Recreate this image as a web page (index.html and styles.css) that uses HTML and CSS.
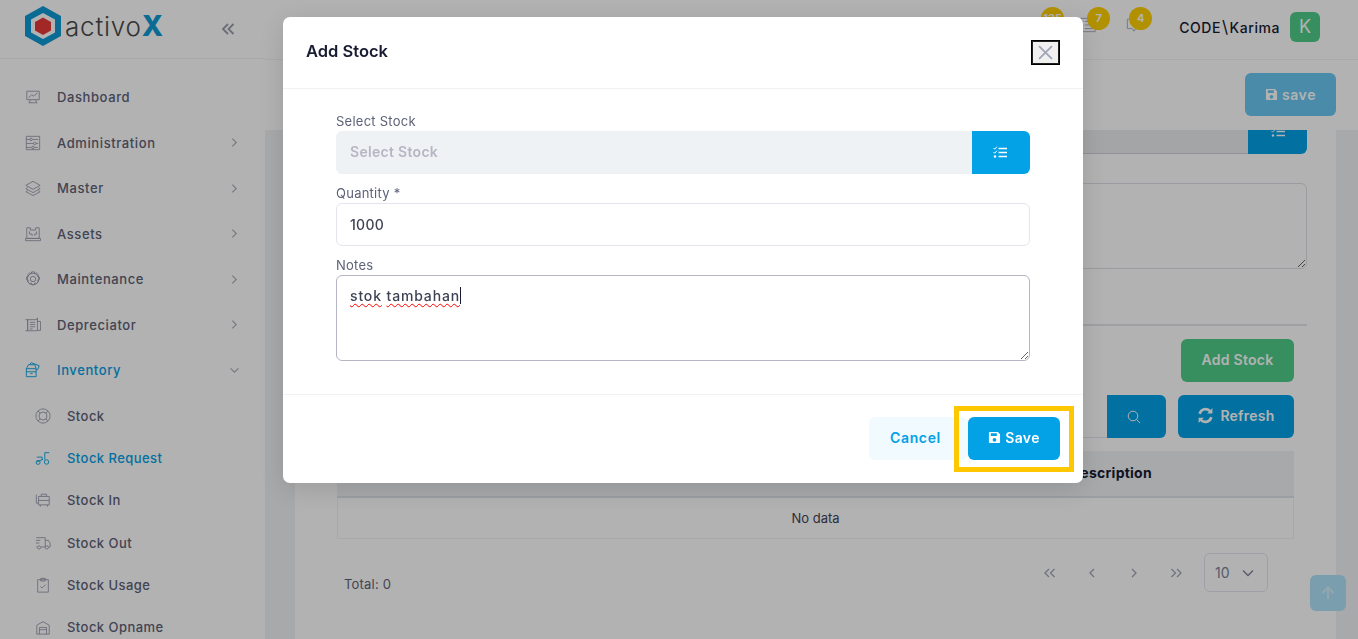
FILE: index.html
```html
<!DOCTYPE html>
<html lang="en">
<head>
<meta charset="utf-8">
<title>Add Stock</title>
<link rel="stylesheet" href="styles.css">
</head>
<body>
<div class="app">
  <aside class="sidebar">
    <div class="brand">
      <svg class="logo" viewBox="0 0 36 40" width="36" height="40"><path d="M18 0 36 10V30L18 40 0 30V10Z" fill="#0f9ad6"/><path d="M18 7 30 13.5V26.500L18 33 6 26.500V13.500Z" fill="#fff"/><path d="M18 11.500 26 16V24.500L18 29 10 24.500V16Z" fill="#e83a3a"/></svg>
      <span class="brand-name">activo<b>X</b></span>
      <svg class="collapse" viewBox="0 0 14 14" width="14" height="14"><path d="M7 2 2 7l5 5M12.500 2l-5 5 5 5" fill="none" stroke="#9a9cae" stroke-width="1.800"/></svg>
    </div>
    <nav class="nav">
      <a class="nav-item"><svg class="ico" viewBox="0 0 18 18"><path d="M2 2.500h14v9.500H2zM5 15.500 6 12m7 3.500L12 12M4 15.500h10M4 10l3.500-3.500 2 1.500L14 4.500"/></svg><span>Dashboard</span></a>
      <a class="nav-item"><svg class="ico" viewBox="0 0 18 18"><path d="M1.500 1.500h15v15h-15zM1.500 5h4m3 0h6.500M1.500 9.500h8m3 0h2.500M1.500 14h6m3 0h4"/><circle cx="6.800" cy="5" r="1.400"/><circle cx="11" cy="9.500" r="1.400"/><circle cx="9" cy="14" r="1.400"/></svg><span>Administration</span><svg class="chev" viewBox="0 0 8 12"><path d="M1.500 1.500 6 6l-4.500 4.500"/></svg></a>
      <a class="nav-item"><svg class="ico" viewBox="0 0 18 18"><path d="M9 1.500 17 6 9 10.500 1 6zM3 8.500 1 9.700 9 14.200l8-4.500-2-1.200M3 12 1 13.200 9 17.500l8-4.300L15 12"/></svg><span>Master</span><svg class="chev" viewBox="0 0 8 12"><path d="M1.500 1.500 6 6l-4.500 4.500"/></svg></a>
      <a class="nav-item"><svg class="ico" viewBox="0 0 18 18"><path d="M2 2h4v2.500h6V2h4v12H2zM.500 14h17v2.500H.500zM5 6v3h3v2M13 6v3h-2v2"/></svg><span>Assets</span><svg class="chev" viewBox="0 0 8 12"><path d="M1.500 1.500 6 6l-4.500 4.500"/></svg></a>
      <a class="nav-item"><svg class="ico" viewBox="0 0 18 18"><circle cx="9" cy="9" r="6.500"/><circle cx="9" cy="9" r="3"/><path d="M7.500 1h3l.5 2 2-.8 2 2-.8 2 2 .5v3l-2 .5.8 2-2 2-2-.8-.5 2h-3l-.5-2-2 .8-2-2 .8-2-2-.5v-3l2-.5-.8-2 2-2 2 .8z"/></svg><span>Maintenance</span><svg class="chev" viewBox="0 0 8 12"><path d="M1.500 1.500 6 6l-4.500 4.500"/></svg></a>
      <a class="nav-item"><svg class="ico" viewBox="0 0 18 18"><path d="M3 3h10l1-2v14.500H3zM.500 3H3v12.500H.500M14 5h3.500v10H14M5.500 6h6m-6 2.500h6m-6 2.500h6m-6 2.500h3"/></svg><span>Depreciator</span><svg class="chev" viewBox="0 0 8 12"><path d="M1.500 1.500 6 6l-4.500 4.500"/></svg></a>
      <a class="nav-item active"><svg class="ico" viewBox="0 0 18 18"><path d="M1.500 7.500h11v9h-11zM1.500 11h11M6 13h2.500M1.500 7.500 4 3h7l1.500 4.500M5 3 7 .8l9 3.400-1.500 4-2 1"/></svg><span>Inventory</span><svg class="chev down" viewBox="0 0 12 8"><path d="M1.500 1.500 6 6l4.500-4.500"/></svg></a>
      <div class="subnav">
        <a class="sub-item"><svg class="ico" viewBox="0 0 18 18"><circle cx="9" cy="9" r="8"/><circle cx="9" cy="9" r="4.500"/><path d="m3.300 3.300 2.500 2.500m6.400 6.400 2.500 2.500m0-11.400-2.500 2.500m-6.400 6.400-2.500 2.500"/></svg><span>Stock</span></a>
        <a class="sub-item active"><svg class="ico" viewBox="0 0 18 18"><path d="M1.500 13.500 9 10.500M11 3h5M11 3v8M2 8h6v3"/><circle cx="3.500" cy="14" r="2.200"/><circle cx="13" cy="13.500" r="2.500"/></svg><span>Stock Request</span></a>
        <a class="sub-item"><svg class="ico" viewBox="0 0 18 18"><path d="M4 5h12v9.500H4zM7 5V2.500h6V5M1.500 3v9.500H4M6 14.500V16.500M14 14.500V16.500M4 9.500h12"/></svg><span>Stock In</span></a>
        <a class="sub-item"><svg class="ico" viewBox="0 0 18 18"><path d="M1.500 3h10v10.500H6.500M11.500 6H15l2 3v4.500h-2M1 6h5M1 9h4M1.500 13.500H2.500"/><circle cx="4.500" cy="14" r="1.800"/><circle cx="13.300" cy="14" r="1.800"/></svg><span>Stock Out</span></a>
        <a class="sub-item"><svg class="ico" viewBox="0 0 18 18"><path d="M3 3h12v14H3zM6.500 1.500h5V4.500h-5zM6 10.500l2 2 4-4"/></svg><span>Stock Usage</span></a>
        <a class="sub-item"><svg class="ico" viewBox="0 0 18 18"><path d="M2 7 9 3l7 4v10H2zM5 17V9.500h8V17M5 12h8"/></svg><span>Stock Opname</span></a>
      </div>
    </nav>
  </aside>

  <main class="main">
    <header class="topbar">
      <div class="notice">
        <svg class="top-ico" viewBox="0 0 18 18"><path d="M2 4h14M2 9h14M2 14h14"/></svg>
        <span class="badge">135</span>
      </div>
      <div class="notice">
        <svg class="top-ico" viewBox="0 0 18 18"><path d="M1 1.500h16v15H1zM5.500 5H15M5.500 9H15M5.500 13H15M2.500 5h1.500M2.500 9h1.500M2.500 13h1.500"/></svg>
        <span class="badge">7</span>
      </div>
      <div class="notice narrow">
        <svg class="top-ico" viewBox="0 0 18 18"><path d="M1.500 2.500h15V13H11l-2 3-2-3H1.500z"/></svg>
        <span class="badge">4</span>
      </div>
      <div class="user">CODE<span class="slash">\</span>Karima</div>
      <div class="avatar">K</div>
    </header>

    <div class="toolbar">
      <button class="btn btn-ghost-save" type="button"><svg class="floppy" viewBox="0 0 14 14"><path d="M1.500 1h9L13 3.500V12a1 1 0 0 1-1 1H2a1 1 0 0 1-1-1V1.500zM3 2.500V5.500h6.500V2.500zM7 7.500a2 2 0 1 0 .01 0z" fill-rule="evenodd"/></svg>save</button>
    </div>

    <div class="content">
      <section class="card">
        <div class="input-group back-select">
          <div class="back-input"></div>
          <div class="back-addon"><svg class="list-ico" viewBox="0 0 14 12"><path d="M5.500 2.500H14M5.500 6.500H14M5.500 10.500H14"/><path class="tick" d="m.5 2 1.200 1.200L4 .7M.5 6l1.200 1.200L4 4.700"/><circle class="dot" cx="2" cy="10.500" r="1.200"/></svg></div>
        </div>
        <textarea class="back-notes" aria-label="Notes"></textarea>
        <hr class="divider">
        <div class="stock-panel">
          <div class="panel-actions"><button class="btn btn-green" type="button">Add Stock</button></div>
          <div class="search-row">
            <div class="search-input"></div>
            <div class="search-btn"><svg class="mag" viewBox="0 0 14 14"><circle cx="6" cy="6" r="4.800"/><path d="m9.500 9.500 3.500 3.500"/></svg></div>
            <button class="btn btn-refresh" type="button"><svg class="refresh" viewBox="0 0 16 16"><path d="M2.500 6.500A5.800 5.800 0 0 1 12.500 4M13.500 9.500A5.800 5.800 0 0 1 3.500 12" fill="none" stroke-width="2.400"/><path d="M14.500 1v5h-5zM1.500 15v-5h5z" stroke="none"/></svg>Refresh</button>
          </div>
          <div class="table">
            <div class="thead"><span>Description</span></div>
            <div class="tbody">No data</div>
          </div>
          <div class="pager-row">
            <span class="total">Total: 0</span>
            <div class="pager">
              <svg class="pg" viewBox="0 0 12 10"><path d="M5 1 1 5l4 4M10.500 1l-4 4 4 4"/></svg>
              <svg class="pg" viewBox="0 0 12 10"><path d="M8 1 4 5l4 4"/></svg>
              <svg class="pg" viewBox="0 0 12 10"><path d="m4 1 4 4-4 4"/></svg>
              <svg class="pg" viewBox="0 0 12 10"><path d="m1.500 1 4 4-4 4M7 1l4 4-4 4"/></svg>
              <div class="page-size"><span>10</span><svg class="pg-down" viewBox="0 0 12 8"><path d="m1 1.500 5 5 5-5"/></svg></div>
            </div>
          </div>
        </div>
      </section>
    </div>
  </main>
</div>

<div class="to-top"><svg viewBox="0 0 14 14" width="14" height="14"><path d="M7 13V1.500M1.500 7 7 1.500 12.500 7" fill="none" stroke="#d4f0fd" stroke-width="2"/></svg></div>

<div class="backdrop"></div>

<div class="modal">
  <div class="modal-head">
    <h2>Add Stock</h2>
    <div class="close"><svg viewBox="0 0 14 14" width="15" height="15"><path d="M1 1l12 12M13 1 1 13" stroke="#a1a5b7" stroke-width="1.700" fill="none"/></svg></div>
  </div>
  <div class="modal-body">
    <label class="label">Select Stock</label>
    <div class="input-group">
      <div class="control disabled">Select Stock</div>
      <div class="addon"><svg class="list-ico" viewBox="0 0 14 12"><path d="M5.500 2.500H14M5.500 6.500H14M5.500 10.500H14"/><path class="tick" d="m.5 2 1.200 1.200L4 .7M.5 6l1.200 1.200L4 4.700"/><circle class="dot" cx="2" cy="10.500" r="1.200"/></svg></div>
    </div>
    <label class="label">Quantity *</label>
    <div class="control">1000</div>
    <label class="label">Notes</label>
    <div class="control notes"><span class="typed">stok</span> <span class="typed caret">tambahan</span></div>
  </div>
  <div class="modal-foot">
    <button class="btn btn-cancel" type="button">Cancel</button>
    <button class="btn btn-save" type="button"><svg class="floppy" viewBox="0 0 14 14"><path d="M1.500 1h9L13 3.500V12a1 1 0 0 1-1 1H2a1 1 0 0 1-1-1V1.500zM3 2.500V5.500h6.500V2.500zM7 7.500a2 2 0 1 0 .01 0z" fill-rule="evenodd"/></svg>Save</button>
  </div>
</div>

<div class="highlight"></div>
</body>
</html>
```
FILE: styles.css
```css
* { box-sizing: border-box; }
html, body { margin: 0; height: 100%; overflow: hidden; }
body { font-family: Inter, "Noto Sans", sans-serif; font-size: 13px; color: #3f4254; background: #fff; }
button { font-family: inherit; border: 0; cursor: pointer; }

.app { display: grid; grid-template-columns: 265px 1fr; height: 639px; overflow: hidden; }

/* sidebar */
.sidebar { background: #fff; overflow: hidden; }
.brand { height: 59px; border-bottom: 1px solid #eff2f5; display: flex; align-items: center; padding: 0 30px 7px 25px; }
.logo { flex: none; margin-top: 1px; }
.brand-name { margin-left: 4px; font-size: 26px; font-weight: 300; letter-spacing: .8px; color: #4a4a4a; flex: 1; line-height: 1; }
.brand-name b { font-weight: 800; font-size: 28px; color: #0f9ad6; margin-left: 0; }
.collapse { flex: none; margin-top: 7px; }
.nav { padding-top: 15.600px; display: flex; flex-direction: column; }
.nav-item { height: 45.500px; display: flex; align-items: center; padding: 0 27px 0 25px; color: #5e6278; font-weight: 500; letter-spacing: .6px; }
.nav-item span { margin-left: 16px; flex: 1; }
.ico { width: 16px; height: 16px; flex: none; fill: none; stroke: #9a9cae; stroke-width: 1; }
.chev { width: 7px; height: 11px; fill: none; stroke: #a9abb9; stroke-width: 1.300; flex: none; }
.chev.down { width: 11px; height: 7px; margin-right: -2px; }
.nav-item.active, .sub-item.active { color: #03a1e6; }
.active .ico { stroke: #03a1e6; }
.subnav { display: flex; flex-direction: column; margin-top: 1.400px; }
.sub-item { height: 42.300px; display: flex; align-items: center; padding-left: 35px; color: #5e6278; font-weight: 500; letter-spacing: .45px; }
.sub-item span { margin-left: 16px; }

/* topbar */
.main { display: flex; flex-direction: column; min-width: 0; }
.topbar { height: 60px; flex: none; border-bottom: 1px solid #eff2f5; display: flex; align-items: center; justify-content: flex-end; padding: 0 38px 6px 0; }
.notice { width: 46px; height: 34px; position: relative; display: flex; align-items: flex-start; }
.notice.narrow { width: 51px; }
.top-ico { width: 16px; height: 16px; fill: none; stroke: #a1a5b7; stroke-width: 1; margin: 7px 0 0 -2px; }
.badge { position: absolute; left: 5px; top: -3px; width: 23px; height: 23px; border-radius: 50%; background: #ffd000; color: #fff; font-size: 11px; font-weight: 700; display: flex; align-items: center; justify-content: center; }
.notice.narrow .badge { left: 1px; }
.user { font-weight: 500; font-size: 14px; color: #181c32; letter-spacing: .55px; margin-right: 10px; white-space: nowrap; }
.slash { font-size: 17px; padding: 0 1px; font-weight: 400; }
.avatar { width: 30px; height: 30px; border-radius: 6px; background: #50cd89; color: #fff; font-size: 18px; display: flex; align-items: center; justify-content: center; }

/* toolbar */
.toolbar { height: 70px; flex: none; background: #fff; display: flex; justify-content: flex-end; padding: 13px 22px 0 0; position: relative; z-index: 1; }
.btn { height: 43px; border-radius: 6px; display: inline-flex; align-items: center; justify-content: center; padding-bottom: 4px; font-size: 14px; font-weight: 600; letter-spacing: .25px; }
.btn-ghost-save { width: 91px; background: #6bc7f4; color: #fff; letter-spacing: .6px; padding-bottom: 2px; }
.floppy { width: 13px; height: 13px; fill: currentColor; margin-right: 4px; flex: none; }

/* page content behind */
.content { flex: 1; background: #f1f2f5; padding: 0 22px 0 30px; display: flex; }
.card { flex: 1; background: #fff; padding: 0 29px 0 42px; min-width: 0; }
.input-group { display: flex; }
.back-select { height: 24px; }
.back-input { flex: 1; background: #ebedf0; border-bottom: 1px solid #d0d2da; }
.back-addon { width: 59px; background: #03a1e6; border-bottom-right-radius: 6px; display: flex; justify-content: center; }
.back-addon .list-ico { margin-top: -5px; }
.list-ico { width: 14px; height: 12px; fill: none; stroke: #fff; stroke-width: 1.700; }
.list-ico .tick { stroke-width: 1; }
.list-ico .dot { fill: #fff; stroke: none; }
.back-notes { display: block; width: 100%; height: 86px; margin-top: 29px; border: 1px solid #dfe0e7; border-radius: 6px; background: #fff; outline: 0; }
.divider { border: 0; height: 2px; background: #e4e6ea; margin: 55px 0 0; }
.stock-panel { margin-right: 13px; margin-top: 13px; }
.panel-actions { display: flex; justify-content: flex-end; }
.btn-green { width: 113px; background: #50cd89; color: #fff; }
.search-row { display: flex; justify-content: flex-end; margin-top: 13px; height: 43px; }
.search-input { width: 300px; border-bottom: 1px solid #e4e6ef; }
.search-btn { width: 59px; background: #03a1e6; border-radius: 0 6px 6px 0; display: flex; align-items: center; justify-content: center; padding-right: 5px; }
.mag { width: 14px; height: 14px; fill: none; stroke: #fff; stroke-width: 1; }
.btn-refresh { width: 116px; margin-left: 12px; background: #03a1e6; color: #fff; }
.refresh { width: 17px; height: 17px; fill: #fff; stroke: #fff; margin-right: 6px; }
.table { margin-top: 13px; }
.thead { height: 47px; background: #eff2f5; border-bottom: 2px solid #dfe2e8; padding: 0 0 2px 733px; display: flex; align-items: center; font-size: 14px; font-weight: 700; letter-spacing: .25px; color: #181c32; }
.tbody { height: 41px; border: 1px solid #eff2f5; border-top: 0; display: flex; align-items: center; justify-content: center; font-size: 13px; }
.pager-row { display: flex; justify-content: space-between; margin-top: 14px; padding-left: 7px; }
.total { margin-top: 23px; color: #5e6278; letter-spacing: .2px; }
.pager { display: flex; align-items: center; gap: 30px; padding-right: 26px; height: 39px; }
.pg { width: 12px; height: 10px; fill: none; stroke: #a1a5b7; stroke-width: 1.300; }
.page-size { width: 64px; height: 39px; margin-left: -8px; border: 1px solid #e4e6ef; border-radius: 6px; display: flex; align-items: center; gap: 12px; padding-left: 10px; font-size: 14px; color: #7e8299; }
.pg-down { width: 12px; height: 8px; fill: none; stroke: #7e8299; stroke-width: 1.300; }

.to-top { position: absolute; left: 1310px; top: 575px; width: 36px; height: 36px; border-radius: 6px; background: #b0e2fa; display: flex; align-items: center; justify-content: center; z-index: 2; }

/* overlay layers */
.backdrop { position: fixed; inset: 0; background: rgba(0, 0, 0, .3); z-index: 5; }
.modal { position: absolute; left: 283px; top: 17px; width: 800px; height: 466px; background: #fff; border-radius: 7px; box-shadow: 0 6px 24px rgba(0, 0, 0, .12); z-index: 6; display: flex; flex-direction: column; }
.modal-head { height: 72px; flex: none; border-bottom: 1px solid #eff2f5; display: flex; align-items: center; justify-content: space-between; padding: 0 23px 0; }
.modal-head h2 { margin: 0 0 4px; font-size: 16.500px; font-weight: 600; color: #181c32; }
.close { width: 29px; height: 25px; background: #f0f0f0; border: 2px solid #222; outline: 1px solid #000; outline-offset: -1px; display: flex; align-items: center; justify-content: center; }
.modal-body { flex: 1; padding: 23px 53px 0; }
.label { display: block; height: 18px; line-height: 18px; margin-bottom: 1px; font-size: 13px; color: #5e6278; letter-spacing: .25px; }
.label + .control, .label + .input-group { margin-bottom: 10px; }
.modal-body .input-group { height: 43px; }
.control { height: 43px; flex: 1; border: 1px solid #e4e6ef; border-radius: 6px; padding: 0 13px 1px; display: flex; align-items: center; font-size: 14px; font-weight: 500; color: #3f4254; letter-spacing: .3px; background: #fff; }
.control.disabled { background: #eff2f5; color: #b5b5c3; border-color: #eff2f5; border-radius: 6px 0 0 6px; font-weight: 600; padding-bottom: 2px; }
.addon { width: 58px; background: #03a1e6; border-radius: 0 6px 6px 0; display: flex; align-items: center; justify-content: center; padding: 0 3px 2px 0; }
.control.notes { height: 86px; display: block; padding: 9px 13px; border-color: #b5b5c3; resize: vertical; overflow: auto; line-height: 21px; white-space: pre-wrap; letter-spacing: .85px; }
.typed { text-decoration: underline wavy #f00 1px; text-underline-offset: 2px; text-decoration-skip-ink: none; }
.caret { border-right: 1px solid #181c32; }
.modal-foot { height: 89px; flex: none; border-top: 1px solid #eff2f5; display: flex; justify-content: flex-end; padding: 22px 23px 0 0; }
.btn-cancel { width: 99px; background: #f1faff; color: #03a1e6; justify-content: flex-start; padding-left: 21px; letter-spacing: .65px; }
.btn-save { width: 92px; background: #03a1e6; color: #fff; letter-spacing: .4px; }
.highlight { position: absolute; left: 954px; top: 406px; width: 120px; height: 66px; border: 5px solid #ffc700; z-index: 7; pointer-events: none; }
```
